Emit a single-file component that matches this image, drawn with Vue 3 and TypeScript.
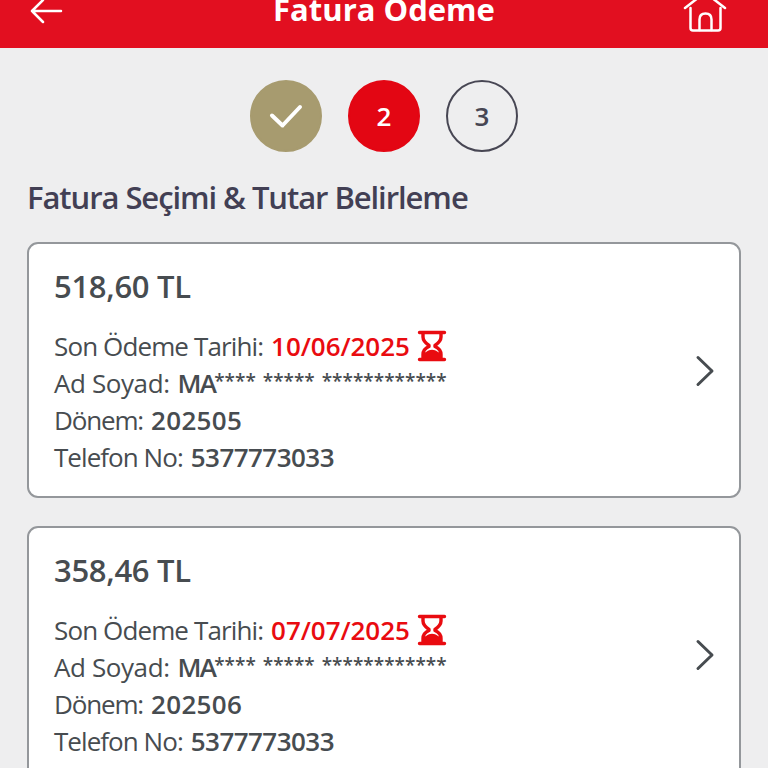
<template>
    <div class="screen">
        <header class="topbar">
            <svg class="back" viewBox="0 0 34 28" fill="none">
                <path d="M14 3 3 14l11 11M3 14h29" />
            </svg>
            <h1 class="topbar-title">Fatura Ödeme</h1>
            <svg class="home" viewBox="0 0 48 40" fill="none">
                <path d="M4 16 22 2q2-1.400 4 0l18 14M9.500 16v20q0 2.500 2.500 2.500h25q2.500 0 2.500-2.500V16" />
                <path d="M18.500 38V27.500q0-6 6-6t6 6V38" />
            </svg>
        </header>

        <main class="content">
            <div class="steps">
                <div class="step done">
                    <svg viewBox="0 0 36 26" fill="none">
                        <path d="m4 12.500 10.500 10L32 4" />
                    </svg>
                </div>
                <div class="step active">2</div>
                <div class="step">3</div>
            </div>

            <h2 class="section-title">Fatura Seçimi &amp; Tutar Belirleme</h2>

            <article v-for="bill in bills" :key="bill.period" class="bill">
                <div class="bill-info">
                    <div class="amount">{{ bill.amount }} TL</div>
                    <div class="row">
                        <span class="label due-label">Son Ödeme Tarihi:</span>
                        <strong class="value due">{{ bill.dueDate }}</strong>
                        <svg class="hourglass" viewBox="0 0 30 32">
                            <path class="frame" d="M2.500 2.500h25M2.500 29.500h25" />
                            <path
                                class="glass"
                                d="M6 3v4c0 4 2.500 6 6 8.500v1C8.500 18 6 20.500 6 24.500V29M24 3v4c0 4-2.500 6-6 8.500v1c3.500 1.500 6 4 6 8V29"
                            />
                            <path class="sand" d="M5 30v-6.500l4-1.500c4-3 8-3 12 0l4 1.500V30z" />
                        </svg>
                    </div>
                    <div class="row">
                        <span class="label name-label">Ad Soyad:</span>
                        <strong class="value initials">MA</strong>
                        <span class="mask">{{ bill.mask }}</span>
                    </div>
                    <div class="row">
                        <span class="label period-label">Dönem:</span>
                        <strong class="value period">{{ bill.period }}</strong>
                    </div>
                    <div class="row">
                        <span class="label phone-label">Telefon No:</span>
                        <strong class="value phone">{{ bill.phone }}</strong>
                    </div>
                </div>
                <svg class="chevron" viewBox="0 0 20 32" fill="none">
                    <path d="m3 2.500 14 13.500L3 29.500" />
                </svg>
            </article>
        </main>
    </div>
</template>

<script setup lang="ts">
interface Bill {
    amount: string;
    dueDate: string;
    mask: string;
    period: string;
    phone: string;
}

const bills: Bill[] = [
    {
        amount: '518,60',
        dueDate: '10/06/2025',
        mask: '**** ***** ************',
        period: '202505',
        phone: '5377773033',
    },
    {
        amount: '358,46',
        dueDate: '07/07/2025',
        mask: '**** ***** ************',
        period: '202506',
        phone: '5377773033',
    },
];
</script>

<style>
body {
    margin: 0;
    overflow: hidden;
    background: #eeeeef;
}
</style>

<style scoped>
.screen {
    height: 768px;
    overflow: hidden;
    font-family: 'Open Sans', 'Noto Sans', sans-serif;
    color: #474c50;
    background: #eeeeef;
}

.topbar {
    display: grid;
    grid-template-columns: 48px 1fr 48px;
    grid-template-rows: 48px;
    align-items: end;
    box-sizing: border-box;
    height: 48px;
    padding: 0 39px 0 29px;
    background: #e20f20;
}

.topbar svg {
    stroke: #fff;
    stroke-width: 2.5;
    stroke-linecap: round;
    stroke-linejoin: round;
}

.back {
    width: 34px;
    height: 28px;
    margin-bottom: 23px;
}

.home {
    width: 48px;
    height: 40px;
    margin-bottom: 16px;
}

.topbar-title {
    margin: 0 0 19px 10px;
    font-size: 31px;
    font-weight: 700;
    line-height: 40px;
    text-align: center;
    white-space: nowrap;
    color: #fff;
}

.content {
    padding: 32px 27px 0;
}

.steps {
    display: flex;
    justify-content: center;
    gap: 26px;
}

.step {
    display: flex;
    align-items: center;
    justify-content: center;
    box-sizing: border-box;
    width: 72px;
    height: 72px;
    border: 2px solid #474653;
    border-radius: 50%;
    font-size: 26px;
    font-weight: 600;
    color: #474653;
}

.step.done {
    border-color: #a79b6f;
    background: #a79b6f;
}

.step.done svg {
    width: 36px;
    height: 26px;
    stroke: #fff;
    stroke-width: 4;
    stroke-linecap: round;
    stroke-linejoin: round;
}

.step.active {
    border-color: #e30613;
    background: #e30613;
    color: #fff;
}

.section-title {
    margin: 25px 0 24px;
    font-size: 31px;
    font-weight: 600;
    line-height: 41px;
    letter-spacing: -1.07px;
    white-space: nowrap;
    color: #423f54;
}

.bill {
    display: flex;
    align-items: center;
    justify-content: space-between;
    box-sizing: border-box;
    height: 256px;
    margin-bottom: 28px;
    padding: 0 24px 0 25px;
    border: 2px solid #94979b;
    border-radius: 11px;
    background: #fff;
}

.bill-info {
    margin-top: 4px;
}

.amount {
    margin-bottom: 23px;
    font-size: 31px;
    font-weight: 600;
    line-height: 37px;
    letter-spacing: -0.3px;
}

.row {
    display: flex;
    height: 37px;
    font-size: 26px;
    line-height: 37px;
    white-space: nowrap;
}

.label {
    margin-right: 8px;
}

.due-label {
    letter-spacing: -0.88px;
}

.name-label {
    letter-spacing: -0.4px;
}

.period-label {
    letter-spacing: -1.15px;
}

.phone-label {
    letter-spacing: -0.95px;
}

.value {
    font-weight: 600;
}

.due {
    letter-spacing: -0.05px;
    color: #e90b10;
}

.initials {
    letter-spacing: -1.8px;
}

.period {
    letter-spacing: 0.3px;
}

.phone {
    letter-spacing: -0.55px;
}

.hourglass {
    width: 30px;
    height: 32px;
    margin: 2px 0 0 7px;
    fill: none;
    stroke: #e90b10;
    stroke-linecap: round;
    stroke-linejoin: round;
}

.frame,
.glass {
    stroke-width: 3.4;
}

.sand {
    fill: #e90b10;
    stroke: none;
}

.mask {
    margin-left: -1px;
    font-size: 19px;
    font-weight: 600;
    line-height: 33px;
    word-spacing: 2px;
}

.chevron {
    width: 20px;
    height: 32px;
    margin-top: 2px;
    stroke: #474c50;
    stroke-width: 3;
    stroke-linecap: round;
    stroke-linejoin: round;
}
</style>
